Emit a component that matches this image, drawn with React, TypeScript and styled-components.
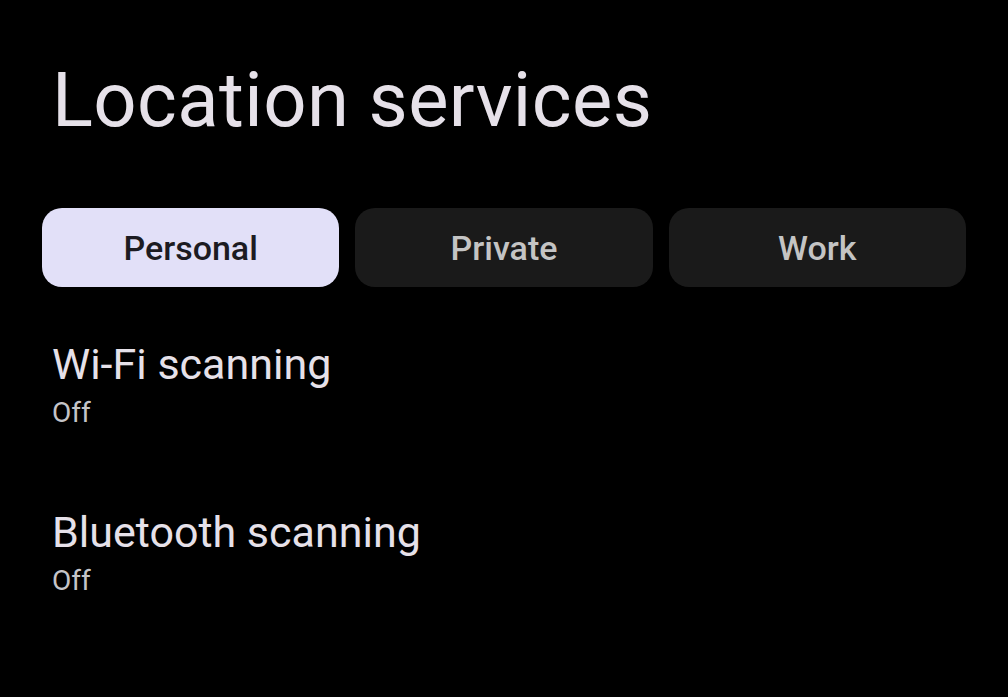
import styled, { createGlobalStyle } from "styled-components";

const GlobalStyle = createGlobalStyle`
  html, body {
    margin: 0;
    padding: 0;
    background: #000;
  }
  body {
    font-family: Roboto, "Noto Sans", sans-serif;
    -webkit-font-smoothing: antialiased;
  }
`;

const tabs = ["Personal", "Private", "Work"];

const settings = [
  { title: "Wi-Fi scanning", summary: "Off" },
  { title: "Bluetooth scanning", summary: "Off" },
];

export default function App() {
  return (
    <Page>
      <GlobalStyle />
      <Title>Location services</Title>

      <TabBar>
        {tabs.map((t, i) => (
          <Tab key={t} $active={i === 0}>
            {t}
          </Tab>
        ))}
      </TabBar>

      <List>
        {settings.map((s) => (
          <Item key={s.title}>
            <ItemTitle>{s.title}</ItemTitle>
            <ItemSummary>{s.summary}</ItemSummary>
          </Item>
        ))}
      </List>
    </Page>
  );
}

const Page = styled.div`
  width: 1008px;
  height: 697px;
  background: #000;
  box-sizing: border-box;
  padding: 62px 42px 0;
  display: flex;
  flex-direction: column;
  overflow: hidden;
`;

const Title = styled.h1`
  margin: 0 0 0 10px;
  font-family: Roboto, sans-serif;
  font-weight: 400;
  font-size: 76px;
  line-height: 76px;
  letter-spacing: 0.4px;
  color: #e6e1e9;
`;

const TabBar = styled.div`
  margin-top: 70px;
  display: grid;
  grid-template-columns: repeat(3, 1fr);
  gap: 16px;
  width: 924px;
`;

const Tab = styled.button<{ $active?: boolean }>`
  height: 79px;
  border: none;
  border-radius: 20px;
  background: ${(p) => (p.$active ? "#e2e0f8" : "#1a1a1a")};
  color: ${(p) => (p.$active ? "#1c1b22" : "#c4c4c4")};
  font-family: Roboto, sans-serif;
  font-weight: 500;
  font-size: 34px;
  padding: 0;
  cursor: pointer;
`;

const List = styled.div`
  margin-top: 52px;
  padding-left: 10px;
  display: flex;
  flex-direction: column;
  gap: 70px;
`;

const Item = styled.div`
  display: flex;
  flex-direction: column;
`;

const ItemTitle = styled.div`
  font-family: Roboto, sans-serif;
  font-size: 43px;
  line-height: 50px;
  color: #e6e1e9;
`;

const ItemSummary = styled.div`
  font-family: Roboto, sans-serif;
  font-size: 28px;
  line-height: 48px;
  color: #c4c4c8;
`;
